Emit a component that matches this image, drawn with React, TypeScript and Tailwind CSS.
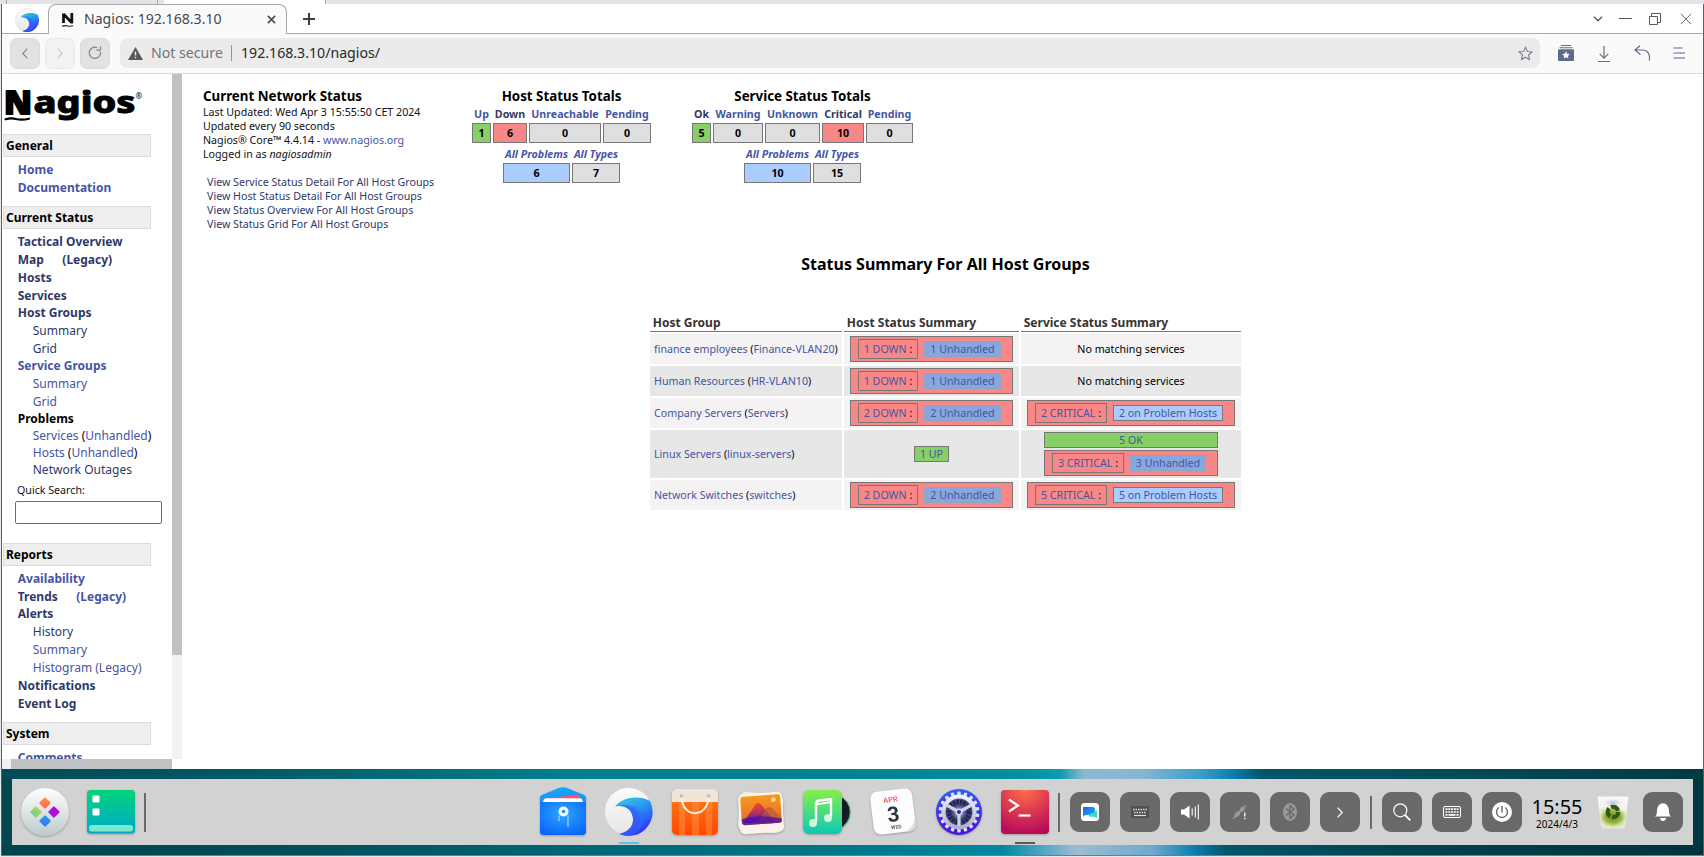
import type { ReactNode } from "react";

const LINK = "text-[#4655a4]";
const SEEN = "text-[#2f3968]";

/* ---------- browser chrome ---------- */

function BrowserMark({ id, className }: { id: string; className: string }) {
  return (
    <svg viewBox="0 0 48 48" className={className}>
      <defs>
        <linearGradient id={id} x1="0" y1="0" x2="0.5" y2="1">
          <stop offset="0" stopColor="#3fd0dc" />
          <stop offset="0.5" stopColor="#2593f5" />
          <stop offset="1" stopColor="#3333f5" />
        </linearGradient>
        <linearGradient id={id + "b"} x1="0" y1="0" x2="0" y2="1">
          <stop offset="0" stopColor="#fbfbfb" />
          <stop offset="1" stopColor="#e6e6e6" />
        </linearGradient>
      </defs>
      <circle cx="24" cy="24" r="23.5" fill={`url(#${id}b)`} stroke="#c9c9c9" strokeWidth="0.6" />
      <path d="M11 19C18 9 35 8 45 13.500A23.500 23.500 0 0 1 15 46C24 44 28.500 38 28.500 32C28.500 23 21 17 11 19Z" fill={`url(#${id})`} />
      <path d="M11 19C24 14 36 20 38.500 29C39.500 38 34 45 26 47.300A23 23 0 0 1 15 46C24 44 28.500 38 28.500 32C28.500 23 21 17 11 19Z" fill="#2b6ff8" opacity="0.55" />
      <path d="M20 18.500C32 19 37 28 35 36C33 43 27 46 22 47.200A23 23 0 0 1 15 46C24 44 28.500 38 28.500 32C28.500 25 25 20 20 18.500Z" fill="#4045ff" opacity="0.4" />
    </svg>
  );
}

function TabBar() {
  return (
    <div className="flex h-[30px] shrink-0 items-end bg-white">
      <div className="flex h-[30px] w-[46px] items-center border-b border-[#a9a9ab] pl-[13px] pt-[3px]">
        <BrowserMark id="bm" className="h-[24px] w-[24px]" />
      </div>
      <div className="flex h-[30px] w-[239px] items-center rounded-t-[8px] border border-b-0 border-[#a9a9ab] bg-[#fafafa] pb-[2px] pl-[12px] pr-[10px]">
        <svg viewBox="0 0 14 16" className="mr-[9px] mt-[2px] h-[16px] w-[14px]">
          <path d="M2.500 1.500V11M2.500 2L10.500 10.500M10.800 1V11.500" stroke="#111" strokeWidth="2.800" fill="none" />
          <path d="M1 14.200Q4 13 7 14Q9.500 14.600 12 13.800" stroke="#222" strokeWidth="1.200" fill="none" />
        </svg>
        <span className="flex-1 whitespace-nowrap text-[14.1px] leading-[20px] text-[#45494f]">Nagios: 192.168.3.10</span>
        <svg viewBox="0 0 10 10" className="mt-px h-[9px] w-[9px]">
          <path d="M1 1L9 9M9 1L1 9" stroke="#45494f" strokeWidth="1.700" />
        </svg>
      </div>
      <div className="flex h-[30px] flex-1 items-center border-b border-[#a9a9ab] pl-[15px] pr-[11px]">
        <svg viewBox="0 0 14 14" className="h-[14px] w-[14px]">
          <path d="M7 1V13M1 7H13" stroke="#3a3d42" strokeWidth="2" />
        </svg>
        <div className="ml-auto flex items-center">
          <svg viewBox="0 0 10 6" className="h-[6px] w-[10px]">
            <path d="M1 0.800L5 4.800L9 0.800" stroke="#55585d" strokeWidth="1.300" fill="none" />
          </svg>
          <div className="ml-[16px] h-px w-[13px] bg-[#55585d]" />
          <svg viewBox="0 0 12 12" className="ml-[17px] h-[12px] w-[12px]">
            <path d="M0.500 3.500H8.500V11.500H0.500ZM2.500 3V0.500H11.500V9.500H9" stroke="#55585d" fill="none" />
          </svg>
          <svg viewBox="0 0 12 12" className="ml-[19px] h-[12px] w-[12px]">
            <path d="M0.800 0.800L11.200 11.200M11.200 0.800L0.800 11.200" stroke="#66696e" strokeWidth="1" />
          </svg>
        </div>
      </div>
    </div>
  );
}

function NavButton({ dim, children }: { dim?: boolean; children: ReactNode }) {
  return (
    <div
      className={
        "flex h-[31px] w-[30px] items-center justify-center rounded-[7px] border " +
        (dim ? "border-[#e8e8e8] bg-[#f2f2f2] text-[#c8c9cc]" : "border-[#dddddd] bg-[#e2e2e2] text-[#7f8694]")
      }
    >
      {children}
    </div>
  );
}

function Toolbar() {
  return (
    <div className="flex h-[40px] shrink-0 items-center border-b border-[#dcdcdc] bg-[#fafafa] pb-[1px] pl-[8px]">
      <div className="flex gap-[5px]">
        <NavButton>
          <svg viewBox="0 0 6 11" className="h-[11px] w-[6px]"><path d="M5.300 0.700L0.900 5.500L5.300 10.300" stroke="currentColor" strokeWidth="1.200" fill="none" /></svg>
        </NavButton>
        <NavButton dim>
          <svg viewBox="0 0 6 11" className="h-[11px] w-[6px]"><path d="M0.700 0.700L5.100 5.500L0.700 10.300" stroke="currentColor" strokeWidth="1.200" fill="none" /></svg>
        </NavButton>
        <NavButton>
          <svg viewBox="0 0 14 14" className="h-[14px] w-[14px]"><path d="M9 1.600A5.600 5.600 0 1 0 12.400 5.800M8.300 4.200H12.500V0.600" stroke="currentColor" strokeWidth="1.200" fill="none" /></svg>
        </NavButton>
      </div>
      <div className="ml-[10px] flex h-[30px] w-[1420px] items-center rounded-[8px] bg-[#ebebeb] pl-[8px] pr-[7px]">
        <svg viewBox="0 0 15 13" className="h-[13px] w-[15px]">
          <path d="M7.500 0L15 13H0Z" fill="#55585c" />
          <path d="M7.500 4.500V8.500M7.500 9.700V11.200" stroke="#ebebeb" strokeWidth="1.400" />
        </svg>
        <span className="-mt-px ml-[8px] w-[73px] whitespace-nowrap text-[14.15px] leading-[20px] text-[#70757a]">Not secure</span>
        <div className="ml-[7px] h-[16px] w-px bg-[#8e9196]" />
        <span className="ml-[9px] text-[14.15px] leading-[20px] text-[#26282b]">192.168.3.10/nagios/</span>
        <svg viewBox="0 0 16 16" className="ml-auto h-[15px] w-[15px]">
          <path d="M8 1.200L10 5.900L15.100 6.300L11.200 9.600L12.400 14.600L8 11.900L3.600 14.600L4.800 9.600L0.900 6.300L6 5.900Z" stroke="#7b8292" strokeWidth="1.200" fill="none" strokeLinejoin="round" />
        </svg>
      </div>
      <svg viewBox="0 0 16 16" className="ml-[18px] h-[16px] w-[16px]">
        <path d="M3 0.500H13M1.500 2.800H14.500" stroke="#5f6b8c" strokeWidth="1.100" />
        <rect x="0" y="4.200" width="16" height="11.800" rx="1" fill="#5f6b8c" />
        <path d="M8 6.200L9.100 8.800L11.900 9L9.800 10.900L10.400 13.600L8 12.200L5.600 13.600L6.200 10.900L4.100 9L6.900 8.800Z" fill="#fff" />
      </svg>
      <svg viewBox="0 0 12 16" className="ml-[24px] mt-[2px] h-[16px] w-[12px]">
        <path d="M6 0V12M1.700 7.800L6 12.100L10.300 7.800M0 15.500H12" stroke="#6c6e74" strokeWidth="1.200" fill="none" />
      </svg>
      <svg viewBox="0 0 17 16" className="ml-[24px] h-[16px] w-[17px]">
        <path d="M6 0.700L1 5L6.500 9.500M1.200 5H8.500C13 5 16.500 8.500 15.300 15.500" stroke="#5f6b9c" strokeWidth="1.200" fill="none" />
      </svg>
      <svg viewBox="0 0 12 12" className="ml-[22px] h-[12px] w-[12px]">
        <path d="M0.500 1H9.500M0.500 6H12M0.500 11H12" stroke="#a9b0c0" strokeWidth="1.800" />
      </svg>
    </div>
  );
}

/* ---------- Nagios side navigation ---------- */

function Section({ children }: { children: ReactNode }) {
  return (
    <div className="ml-px h-[23px] w-[148px] shrink-0 border border-[#dbdbdb] bg-[#eeeeee] pl-[2px] text-[12px] font-bold leading-[22px] text-black">
      {children}
    </div>
  );
}

function Item({ sub, seen, short, children }: { sub?: boolean; seen?: boolean; short?: boolean; children: ReactNode }) {
  return (
    <div
      className={[
        "shrink-0 whitespace-pre text-[12px] leading-[18px]",
        short ? "h-[17px]" : "h-[18px]",
        sub ? "pl-[30.75px]" : "pl-[15.75px] font-bold",
        seen ? SEEN : LINK,
      ].join(" ")}
    >
      {children}
    </div>
  );
}

function Logo() {
  return (
    <svg viewBox="0 0 146 60" className="h-[60px] w-[146px] shrink-0">
      <g fontFamily="Noto Sans, sans-serif" fill="#000" stroke="#000" strokeLinejoin="round">
        <text x="2" y="39.500" fontSize="32" fontWeight="900" strokeWidth="1.800" textLength="28" lengthAdjust="spacingAndGlyphs">N</text>
        <text x="31.500" y="38.500" fontSize="31" fontWeight="800" strokeWidth="0.900" textLength="102" lengthAdjust="spacingAndGlyphs">agios</text>
      </g>
      <path d="M3.500 45.300Q9 43.700 14 45Q20 46.300 27 44.700" stroke="#000" strokeWidth="2.200" fill="none" strokeLinecap="round" />
      <text x="133.500" y="24.500" fontSize="8" fontFamily="Noto Sans, sans-serif" fontWeight="600" fill="#111">®</text>
    </svg>
  );
}

function Sidebar() {
  return (
    <div className="flex w-[180px] shrink-0 flex-col">
      <div className="flex h-[685px]">
        <div className="flex w-[170px] flex-col overflow-hidden">
          <Logo />
          <Section>General</Section>
          <div className="h-[4px] shrink-0" />
          <Item>Home</Item>
          <Item>Documentation</Item>
          <div className="h-[9px] shrink-0" />
          <Section>Current Status</Section>
          <div className="h-[4px] shrink-0" />
          <Item seen>Tactical Overview</Item>
          <Item seen>Map<span className="ml-[18.5px]">(Legacy)</span></Item>
          <Item seen>Hosts</Item>
          <Item seen short>Services</Item>
          <Item seen>Host Groups</Item>
          <Item sub seen>Summary</Item>
          <Item sub seen short>Grid</Item>
          <Item>Service Groups</Item>
          <Item sub>Summary</Item>
          <Item sub short>Grid</Item>
          <Item short><span className="text-black">Problems</span></Item>
          <Item sub short>Services <span className="text-black">(</span>Unhandled<span className="text-black">)</span></Item>
          <Item sub short>Hosts <span className="text-black">(</span>Unhandled<span className="text-black">)</span></Item>
          <Item sub seen>Network Outages</Item>
          <div className="mt-[3px] h-[19px] shrink-0 pl-[15px] text-[10.667px] leading-[16px] text-[#111]">Quick Search:</div>
          <div className="ml-[13px] h-[23px] w-[147px] shrink-0 rounded-[2px] border border-[#6f6f6f] bg-white" />
          <div className="h-[19px] shrink-0" />
          <Section>Reports</Section>
          <div className="h-[4px] shrink-0" />
          <Item>Availability</Item>
          <Item short><span className={SEEN}>Trends</span><span className="ml-[18.5px]">(Legacy)</span></Item>
          <Item seen>Alerts</Item>
          <Item sub seen>History</Item>
          <Item sub>Summary</Item>
          <Item sub>Histogram (Legacy)</Item>
          <Item seen>Notifications</Item>
          <Item seen>Event Log</Item>
          <div className="h-[9px] shrink-0" />
          <Section>System</Section>
          <div className="h-[4px] shrink-0" />
          <Item>Comments</Item>
        </div>
        <div className="w-[10px] bg-[#f1f2f4]">
          <div className="h-[581px] bg-[#c0c1c3]" />
        </div>
      </div>
      <div className="flex h-[10px]">
        <div className="w-[9px] bg-[#f1f2f4]" />
        <div className="w-[161px] bg-[#c0c1c3]" />
      </div>
    </div>
  );
}

/* ---------- status totals ---------- */

const TONE = {
  green: "bg-[#88d066]",
  red: "bg-[#f88888]",
  grey: "bg-[#dfdfdf]",
  blue: "bg-[#aaccff]",
};
type Tone = keyof typeof TONE;
type Total = { label: string; value: string; tone: Tone; seen?: boolean };

function TotalGrid({ cols, items, italic }: { cols: string; items: Total[]; italic?: boolean }) {
  return (
    <div className={"grid gap-x-[2px] text-center text-[10.667px] font-bold " + cols}>
      {items.map((t) => (
        <div key={t.label} className={"flex justify-center whitespace-nowrap " + (italic ? "h-[20px] italic leading-[22px] " : "h-[18px] leading-[18px] ") + (t.seen ? SEEN : LINK)}>
          {t.label}
        </div>
      ))}
      {items.map((t) => (
        <div key={t.label + "v"} className={"h-[20px] border border-[#777777] leading-[19px] text-black " + TONE[t.tone]}>
          {t.value}
        </div>
      ))}
    </div>
  );
}

function Totals() {
  return (
    <div className="flex h-[160px] pt-[12px]">
      <div className="w-[290px] whitespace-nowrap pl-[21px] text-[10.667px] leading-[14px] text-[#111]">
        <div className="h-[19px] text-[13.333px] font-bold leading-[20px] text-black">Current Network Status</div>
        <div>Last Updated: Wed Apr 3 15:55:50 CET 2024</div>
        <div>Updated every 90 seconds</div>
        <div>Nagios® Core™ 4.4.14 - <span className={LINK}>www.nagios.org</span></div>
        <div>Logged in as <i>nagiosadmin</i></div>
        <div className={"mt-[14px] pl-[4px] " + SEEN}>
          <div>View Service Status Detail For All Host Groups</div>
          <div>View Host Status Detail For All Host Groups</div>
          <div>View Status Overview For All Host Groups</div>
          <div>View Status Grid For All Host Groups</div>
        </div>
      </div>
      <div className="w-[179px]">
        <div className="h-[19px] text-center text-[13.333px] font-bold leading-[20px] text-black">Host Status Totals</div>
        <TotalGrid
          cols="grid-cols-[19px_34px_72px_48px]"
          items={[
            { label: "Up", value: "1", tone: "green" },
            { label: "Down", value: "6", tone: "red", seen: true },
            { label: "Unreachable", value: "0", tone: "grey" },
            { label: "Pending", value: "0", tone: "grey" },
          ]}
        />
        <div className="pl-[31px]">
          <TotalGrid
            italic
            cols="grid-cols-[67px_48px]"
            items={[
              { label: "All Problems", value: "6", tone: "blue" },
              { label: "All Types", value: "7", tone: "grey" },
            ]}
          />
        </div>
      </div>
      <div className="ml-[41px] w-[221px]">
        <div className="h-[19px] text-center text-[13.333px] font-bold leading-[20px] text-black">Service Status Totals</div>
        <TotalGrid
          cols="grid-cols-[19px_50px_55px_42px_47px]"
          items={[
            { label: "Ok", value: "5", tone: "green", seen: true },
            { label: "Warning", value: "0", tone: "grey" },
            { label: "Unknown", value: "0", tone: "grey" },
            { label: "Critical", value: "10", tone: "red", seen: true },
            { label: "Pending", value: "0", tone: "grey" },
          ]}
        />
        <div className="pl-[52px]">
          <TotalGrid
            italic
            cols="grid-cols-[67px_48px]"
            items={[
              { label: "All Problems", value: "10", tone: "blue" },
              { label: "All Types", value: "15", tone: "grey" },
            ]}
          />
        </div>
      </div>
    </div>
  );
}

/* ---------- host group summary ---------- */

function Alarm({ label, detail, size, host }: { label: string; detail: string; size: "down" | "crit" | "hosts"; host?: boolean }) {
  const outer = { down: "w-[163px]", crit: "w-[174px]", hosts: "w-[208px]" }[size];
  const left = size === "down" ? "w-[60px]" : "w-[72px]";
  const right = { down: "w-[77px]", crit: "w-[76px]", hosts: "w-[110px]" }[size];
  return (
    <div className={"flex h-[26px] items-center border border-[#777777] bg-[#f88888] pl-[7px] " + outer}>
      <div className={"h-[20px] whitespace-nowrap border border-[#777777] text-center leading-[19px] " + left}>
        <span className={LINK}>{label}</span> <span className="text-black">:</span>
      </div>
      <div
        className={
          "ml-[6px] h-[16px] whitespace-nowrap border text-center leading-[15px] " + LINK + " " + right + " " +
          (host ? "border-[#777777] bg-[#aaccff]" : "border-[#8ea6c4] bg-[#88a8dd]")
        }
      >
        {detail}
      </div>
    </div>
  );
}

function Row({ name, alias, odd, tall, host, service }: { name: string; alias: string; odd?: boolean; tall?: boolean; host: ReactNode; service: ReactNode }) {
  const cell = (odd ? "bg-[#e7e7e7] " : "bg-[#f4f2f2] ") + (tall ? "h-[48px] " : "h-[30px] ");
  return (
    <>
      <div className={cell + "flex items-center whitespace-pre pl-[4px] " + LINK}>
        {name} <span className="text-black">(</span>{alias}<span className="text-black">)</span>
      </div>
      <div className={cell + "flex items-center justify-center"}>{host}</div>
      <div className={cell + "flex flex-col items-center justify-center gap-[2px] text-black"}>{service}</div>
    </>
  );
}

function Summary() {
  return (
    <div className="flex flex-col items-center pl-[6px]">
      <div className="mt-[18px] text-[16px] font-bold leading-[24px] text-black">Status Summary For All Host Groups</div>
      <div className="mt-[38px] grid grid-cols-[192px_175px_220px] gap-[2px] text-[10.667px] leading-[16px]">
        {["Host Group", "Host Status Summary", "Service Status Summary"].map((h) => (
          <div key={h} className="h-[18px] border-b border-[#777777] pl-[2.75px] text-[12px] font-bold leading-[18px] text-[#333333]">{h}</div>
        ))}
        <Row name="finance employees" alias="Finance-VLAN20" host={<Alarm size="down" label="1 DOWN" detail="1 Unhandled" />} service="No matching services" />
        <Row odd name="Human Resources" alias="HR-VLAN10" host={<Alarm size="down" label="1 DOWN" detail="1 Unhandled" />} service="No matching services" />
        <Row name="Company Servers" alias="Servers" host={<Alarm size="down" label="2 DOWN" detail="2 Unhandled" />} service={<Alarm size="hosts" host label="2 CRITICAL" detail="2 on Problem Hosts" />} />
        <Row
          odd
          tall
          name="Linux Servers"
          alias="linux-servers"
          host={<div className={"h-[16px] w-[35px] border border-[#777777] bg-[#88d066] text-center leading-[15px] " + LINK}>1 UP</div>}
          service={
            <>
              <div className={"h-[16px] w-[174px] border border-[#777777] bg-[#88d066] text-center leading-[15px] " + LINK}>5 OK</div>
              <Alarm size="crit" label="3 CRITICAL" detail="3 Unhandled" />
            </>
          }
        />
        <Row name="Network Switches" alias="switches" host={<Alarm size="down" label="2 DOWN" detail="2 Unhandled" />} service={<Alarm size="hosts" host label="5 CRITICAL" detail="5 on Problem Hosts" />} />
      </div>
    </div>
  );
}

/* ---------- dock ---------- */

function Grad({ id, a, b, x2 = "0" }: { id: string; a: string; b: string; x2?: string }) {
  return (
    <linearGradient id={id} x1="0" y1="0" x2={x2} y2="1">
      <stop offset="0" stopColor={a} />
      <stop offset="1" stopColor={b} />
    </linearGradient>
  );
}

function Icon({ children }: { children: ReactNode }) {
  return <svg viewBox="0 0 50 50" className="h-[50px] w-[50px] drop-shadow-[0_1px_1px_rgba(0,0,0,0.25)]">{children}</svg>;
}

function Launcher() {
  return (
    <Icon>
      <defs>
        <Grad id="la" a="#ffffff" b="#bccbcd" />
        <Grad id="l1" a="#ff9a3c" b="#ff5a5f" x2="1" />
        <Grad id="l2" a="#b5cf5c" b="#6fd08c" />
        <Grad id="l3" a="#c400c8" b="#9a1be8" />
        <Grad id="l4" a="#1fa0f5" b="#3a6df5" x2="1" />
      </defs>
      <circle cx="25" cy="25" r="24" fill="url(#la)" />
      <rect x="20.800" y="11.800" width="8.500" height="8.500" rx="1" transform="rotate(45 25 16)" fill="url(#l1)" />
      <rect x="11.800" y="20.800" width="8.500" height="8.500" rx="1" transform="rotate(45 16 25)" fill="url(#l2)" />
      <rect x="29.700" y="20.800" width="8.500" height="8.500" rx="1" transform="rotate(45 34 25)" fill="url(#l3)" />
      <rect x="20.800" y="29.700" width="8.500" height="8.500" rx="1" transform="rotate(45 25 34)" fill="url(#l4)" />
    </Icon>
  );
}

function MultiTask() {
  return (
    <Icon>
      <defs><Grad id="mt" a="#04d377" b="#00a8cf" /></defs>
      <rect x="1" y="3" width="48" height="43.500" rx="3.500" fill="url(#mt)" />
      <rect x="6.500" y="8.500" width="7" height="7" rx="1" fill="#fff" />
      <rect x="6.500" y="21.500" width="7" height="7" rx="1" fill="#fff" />
      <rect x="3" y="38" width="44" height="6.500" rx="2.500" fill="#7ce8cc" />
    </Icon>
  );
}

function FileManager() {
  return (
    <Icon>
      <defs>
        <Grad id="fm1" a="#19a5f7" b="#0a72f0" />
        <radialGradient id="fm2" cx="0.5" cy="0.35" r="0.7"><stop offset="0" stopColor="#2ba6ff" /><stop offset="1" stopColor="#0a66fa" /></radialGradient>
      </defs>
      <path d="M2 11Q2 8.500 5 7.500L21 1Q25 -0.300 29 1L45 7.500Q48 8.500 48 11V44Q48 48 44 48H6Q2 48 2 44Z" fill="url(#fm1)" />
      <path d="M5 14L7 12L38 7.500Q41 7 42 10L43 14Z" fill="#ff4d76" />
      <path d="M8 11.300H42Q44.500 11.500 45 15.500H5Q5 12 8 11.300Z" fill="#fff" />
      <path d="M2 15H48V44Q48 48 44 48H6Q2 48 2 44Z" fill="url(#fm2)" />
      <circle cx="25.500" cy="24.500" r="5" fill="#fff" /><circle cx="25.500" cy="24.500" r="1.800" fill="#1590ff" />
      <path d="M21 28.500V34M30 28.500V40" stroke="#9fd3ff" strokeWidth="1.600" opacity="0.8" />
    </Icon>
  );
}

function AppStore() {
  return (
    <Icon>
      <defs><Grad id="as" a="#ff7e1a" b="#ff4a00" /></defs>
      <rect x="2" y="2" width="46" height="46" rx="5" fill="url(#as)" />
      <path d="M9 15H15V48H9ZM22 15H29V48H22ZM36 15H42V48H36Z" fill="#ff9c52" opacity="0.4" />
      <path d="M2 15V7Q2 2 7 2H43Q48 2 48 7V15Z" fill="#f3e4d8" />
      <path d="M11.500 9C11.500 32 38.500 32 38.500 9" stroke="#fdeee4" strokeWidth="2" fill="none" />
      <circle cx="11.500" cy="9" r="1.800" fill="#c8bcb3" /><circle cx="38.500" cy="9" r="1.800" fill="#c8bcb3" />
    </Icon>
  );
}

function Album() {
  return (
    <Icon>
      <defs><Grad id="al" a="#f79a1e" b="#e0662c" /><Grad id="al2" a="#ff4a20" b="#5a14a8" /></defs>
      <rect x="3" y="6" width="43" height="39" rx="6" fill="#e9e9e9" transform="rotate(5 25 26)" />
      <rect x="3" y="6" width="44" height="40" rx="5" fill="#fbf2ea" transform="rotate(-4 25 26)" />
      <g transform="rotate(-4 25 22)">
        <rect x="5" y="8.500" width="40" height="28.500" rx="3" fill="url(#al)" />
        <path d="M6 35L20 17Q23 14 26 18L38 36Z" fill="url(#al2)" />
        <path d="M20 37L30 22Q33 19 36 22L45 33V35Q45 37 43 37Z" fill="#b8553c" opacity="0.65" />
        <path d="M5 31Q20 26 45 33V34Q45 37 42 37H8Q5 37 5 34Z" fill="#4a10a5" opacity="0.75" />
        <circle cx="38" cy="13.500" r="2.400" fill="#ffd98a" />
      </g>
    </Icon>
  );
}

function Music() {
  return (
    <Icon>
      <defs><Grad id="mu" a="#86ee4c" b="#0cc9b4" /></defs>
      <path d="M36 8Q48 14 48 25T36 43Z" fill="#151b26" stroke="#11a86c" strokeWidth="0.800" />
      <rect x="1" y="3" width="39" height="44" rx="6" fill="url(#mu)" />
      <path d="M14 35V17Q14 14 17 13.500L29 12V30" stroke="#fff" strokeWidth="2.400" fill="none" />
      <path d="M14 17.500L29 15" stroke="#fff" strokeWidth="2" />
      <circle cx="11" cy="36" r="4" fill="#d2f8dc" /><circle cx="26" cy="31" r="4" fill="#d2f8dc" />
    </Icon>
  );
}

function Calendar() {
  return (
    <Icon>
      <g transform="rotate(-7 25 25)" fontFamily="Roboto, sans-serif" textAnchor="middle">
        <rect x="4" y="3" width="42" height="43" rx="7" fill="#fdfdfd" />
        <path d="M46 34V39Q46 46 39 46H34Q43 44 46 34Z" fill="#dcdcdc" />
        <text x="24" y="15" fontSize="7.500" fontWeight="500" fill="#e8585e">APR</text>
        <text x="25" y="34.500" fontSize="21" fontWeight="700" fill="#2b3440">3</text>
        <text x="26.500" y="42" fontSize="5" fontWeight="500" fill="#444">WED</text>
      </g>
    </Icon>
  );
}

function Settings() {
  const teeth = Array.from({ length: 18 }, (_, i) => i * 20);
  return (
    <Icon>
      <defs><Grad id="se" a="#2e5cf8" b="#4a12dc" /><Grad id="se2" a="#eef0fa" b="#aeb2cf" /></defs>
      <circle cx="25" cy="25" r="23" fill="url(#se)" />
      {teeth.map((a) => <rect key={a} x="23.300" y="4.500" width="3.400" height="5" rx="1" fill="#dfe2f2" transform={`rotate(${a} 25 25)`} />)}
      <circle cx="25" cy="25" r="15.500" fill="#4d5288" stroke="url(#se2)" strokeWidth="4" />
      <circle cx="25" cy="25" r="10" fill="none" stroke="#20264e" strokeWidth="5" strokeDasharray="2.500 0.900" />
      <circle cx="25" cy="25" r="5.500" fill="#6f74a4" />
      <path d="M25 25V39M25 25L12.500 18M25 25L37.500 18" stroke="#cfd3e6" strokeWidth="3.200" />
      <circle cx="25" cy="25" r="3.600" fill="#d9dcec" /><circle cx="25" cy="25" r="2" fill="#2330a8" />
    </Icon>
  );
}

function Terminal() {
  return (
    <Icon>
      <defs>
        <radialGradient id="te" cx="0.5" cy="0" r="1"><stop offset="0" stopColor="#ff7048" /><stop offset="0.5" stopColor="#dc3a50" /><stop offset="1" stopColor="#b80a5a" /></radialGradient>
      </defs>
      <rect x="1" y="3" width="48" height="44" rx="4" fill="url(#te)" />
      <path d="M9 12.500L18 18.500L9 24.500" stroke="#fff" strokeWidth="2.200" fill="none" />
      <path d="M18.500 28.500H30.500" stroke="#fff" strokeWidth="2.200" />
    </Icon>
  );
}

function Slot({ mark, children }: { mark?: "blue" | "dark"; children: ReactNode }) {
  return (
    <div className="flex h-[66px] w-[66px] flex-col items-center pt-[8px]">
      {children}
      {mark && <div className={"mt-[5px] h-[2px] w-[20px] " + (mark === "blue" ? "bg-[#62bdee]" : "bg-[#5b5b5b]")} />}
    </div>
  );
}

function Tray({ children }: { children: ReactNode }) {
  return <div className="flex h-[40px] w-[40px] items-center justify-center rounded-[9px] bg-[#696969]">{children}</div>;
}

function Keys({ dim }: { dim?: boolean }) {
  return dim ? (
    <svg viewBox="0 0 18 12" className="h-[12px] w-[18px]">
      <rect width="18" height="12" rx="1" fill="#505050" />
      <path d="M2 3.500H16M3 6.500H15" stroke="#ddd" strokeWidth="1.300" strokeDasharray="1.500 1" />
      <path d="M3 9.500H15" stroke="#ddd" strokeWidth="1.200" />
    </svg>
  ) : (
    <svg viewBox="0 0 18 12" className="h-[12px] w-[18px]">
      <rect x="0.500" y="0.500" width="17" height="11" rx="1.500" stroke="#fff" fill="none" />
      <path d="M2.500 3.200H15.500M2.500 6H15.500" stroke="#fff" strokeWidth="1.700" strokeDasharray="2 0.800" />
      <path d="M2.500 8.900H4.500M5.500 8.900H12.500M13.500 8.900H15.500" stroke="#fff" strokeWidth="1.600" />
    </svg>
  );
}

function Dock() {
  return (
    <div className="flex h-[66px] items-center bg-[#d2d2d2] pl-[8px] pr-[10px]">
      <Launcher />
      <div className="ml-[16px]"><MultiTask /></div>
      <div className="ml-[8px] h-[39px] w-[2px] bg-[#696969]" />
      <div className="ml-auto flex items-center">
        <Slot><FileManager /></Slot>
        <Slot mark="blue"><BrowserMark id="dm" className="mb-px mr-px h-[49px] w-[49px]" /></Slot>
        <Slot><AppStore /></Slot>
        <Slot><Album /></Slot>
        <Slot><Music /></Slot>
        <Slot><Calendar /></Slot>
        <Slot><Settings /></Slot>
        <Slot mark="dark"><Terminal /></Slot>
      </div>
      <div className="h-[39px] w-[2px] bg-[#696969]" />
      <div className="ml-[10px] flex gap-[10px]">
        <Tray>
          <svg viewBox="0 0 18 18" className="h-[18px] w-[18px]">
            <defs><Grad id="as1" a="#1c62f5" b="#18b5f5" x2="1" /></defs>
            <rect width="18" height="18" rx="3.500" fill="#fff" />
            <path d="M2 4H11.500Q14 4 14 6.500V12H4.500L2 13.500Z" fill="url(#as1)" />
            <path d="M9 7.500H16V15L13.500 13.800H8.500Q6.500 11.500 9 7.500Z" fill="#38d8c8" />
            <path d="M7 5H13V9.500Q9 10 7.500 12Z" fill="#1a8cf5" />
          </svg>
        </Tray>
        <Tray><Keys dim /></Tray>
        <Tray>
          <svg viewBox="0 0 18 16" className="h-[16px] w-[18px]">
            <path d="M0 5.500H3L8.500 1.500V14.500L3 10.500H0Z" fill="#fff" />
            <path d="M11.200 4.500V11.500M14.300 2.500V13.500M17.300 0.500V15.500" stroke="#fff" strokeWidth="1.100" />
          </svg>
        </Tray>
        <Tray>
          <svg viewBox="0 0 16 16" className="h-[16px] w-[16px]">
            <path d="M1 14.500L4 11.500M4 11.500L14 1.500" stroke="#999" strokeWidth="1.200" />
            <ellipse cx="5.300" cy="10.300" rx="3.400" ry="2.200" transform="rotate(-45 5.300 10.300)" fill="#999" />
            <ellipse cx="10.200" cy="5.300" rx="3" ry="2.200" transform="rotate(-45 10.200 5.300)" fill="#999" />
            <path d="M12.800 8.500V12.500M12.800 13.700V15.300" stroke="#fff" strokeWidth="1.300" />
          </svg>
        </Tray>
        <Tray>
          <svg viewBox="0 0 16 18" className="h-[18px] w-[16px]">
            <ellipse cx="8" cy="9" rx="7" ry="9" fill="#999" />
            <path d="M4 5.500L12 12L8 15.500V2.500L12 6L4 12.500" stroke="#666" strokeWidth="1.200" fill="none" />
          </svg>
        </Tray>
        <Tray>
          <svg viewBox="0 0 6 11" className="h-[11px] w-[6px]"><path d="M0.600 0.600L5.200 5.500L0.600 10.400" stroke="#fff" strokeWidth="1.200" fill="none" /></svg>
        </Tray>
      </div>
      <div className="ml-[10px] h-[33px] w-[2px] bg-[#696969]" />
      <div className="ml-[10px] flex gap-[10px]">
        <Tray>
          <svg viewBox="0 0 18 18" className="h-[18px] w-[18px]">
            <circle cx="7.300" cy="7.300" r="6.500" stroke="#fff" strokeWidth="1.200" fill="none" />
            <path d="M12 12L17.300 17.300" stroke="#fff" strokeWidth="1.800" />
          </svg>
        </Tray>
        <Tray><Keys /></Tray>
        <Tray>
          <svg viewBox="0 0 20 20" className="h-[20px] w-[20px]">
            <circle cx="10" cy="10" r="10" fill="#fff" />
            <path d="M10 4V10.500M6.800 5.500A5.500 5.500 0 1 0 13.200 5.500" stroke="#696969" strokeWidth="1.400" fill="none" />
          </svg>
        </Tray>
      </div>
      <div className="ml-[7px] flex w-[56px] flex-col items-center pt-[2px] text-black">
        <div className="text-[20px] leading-[22px]">15:55</div>
        <div className="text-[10px] leading-[12px]">2024/4/3</div>
      </div>
      <svg viewBox="0 0 32 33" className="ml-[12px] h-[33px] w-[32px]">
        <defs>
          <Grad id="tr" a="#f8f9fb" b="#e9ecd9" />
          <radialGradient id="tr2"><stop offset="0" stopColor="#6d8c1c" /><stop offset="0.6" stopColor="#9cb53e" /><stop offset="1" stopColor="#cddb98" stopOpacity="0.300" /></radialGradient>
          <radialGradient id="tr3"><stop offset="0" stopColor="#b4bcd8" /><stop offset="1" stopColor="#f4f5fa" stopOpacity="0" /></radialGradient>
        </defs>
        <path d="M0.500 0.500H31.500L28 30Q27.500 32.500 25 32.500H7Q4.500 32.500 4 30Z" fill="url(#tr)" />
        <ellipse cx="16" cy="7" rx="12" ry="6" fill="url(#tr3)" />
        <path d="M2 14Q9 8 16 12T30 14L27.500 29Q27 31.500 24 31.500H8Q5 31.500 4.500 29Z" fill="url(#tr2)" />
        <circle cx="16" cy="16" r="5.200" fill="none" stroke="#2f5a10" strokeWidth="4.200" strokeDasharray="8.800 2.100" />
      </svg>
      <div className="ml-[14px]">
        <Tray>
          <svg viewBox="0 0 16 18" className="h-[18px] w-[16px]">
            <path d="M0 13.500Q2 12 2 8.500C2 3.500 4.500 0.300 8 0.300S14 3.500 14 8.500Q14 12 16 13.500Z" fill="#fff" />
            <path d="M4.800 15H11.200Q10.500 18 8 18T4.800 15Z" fill="#fff" />
          </svg>
        </Tray>
      </div>
    </div>
  );
}

export default function App() {
  return (
    <div className="flex h-[857px] w-[1704px] flex-col overflow-hidden bg-[#e9e9e9] font-['Noto_Sans',sans-serif]">
      <div className="flex h-[4px] shrink-0 bg-[#e3e4e7] pl-[6px]">
        <div className="w-[152px] border-x border-[#a9a9ab]" />
        <div className="ml-[6px] w-[162px] border-r border-[#a9a9ab] bg-white" />
      </div>
      <div className="ml-px flex h-[852px] flex-col border-b border-l border-r border-b-[#77797b] border-l-[#5d6063] border-r-[#5d6063]">
        <TabBar />
        <Toolbar />
        <div className="flex h-[695px] shrink-0 bg-white">
          <Sidebar />
          <div className="flex-1">
            <Totals />
            <Summary />
          </div>
        </div>
        <div className="h-[10px] shrink-0 bg-[linear-gradient(90deg,#004b57_0px,#005a66_250px,#007e8c_560px,#008595_900px,#0090a0_1020px,#0c9cb4_1058px,#8cb9d0_1082px,#86b6d2_1140px,#3f9fcb_1195px,#0c80b0_1230px,#00566a_1260px,#004f5c_1400px,#003a44_1700px)]" />
        <div className="bg-[linear-gradient(90deg,#00474f_50%,#003740_50%)] pl-[10px] pr-[10px]"><Dock /></div>
        <div className="h-[10px] shrink-0 bg-[linear-gradient(90deg,#00434e_0px,#004f5b_300px,#006573_560px,#00788a_850px,#0088a0_1000px,#5aa9c8_1045px,#9dbcd2_1075px,#6fa9cc_1150px,#1080b4_1190px,#00566a_1225px,#004450_1400px,#00333c_1700px)]" />
      </div>
    </div>
  );
}
